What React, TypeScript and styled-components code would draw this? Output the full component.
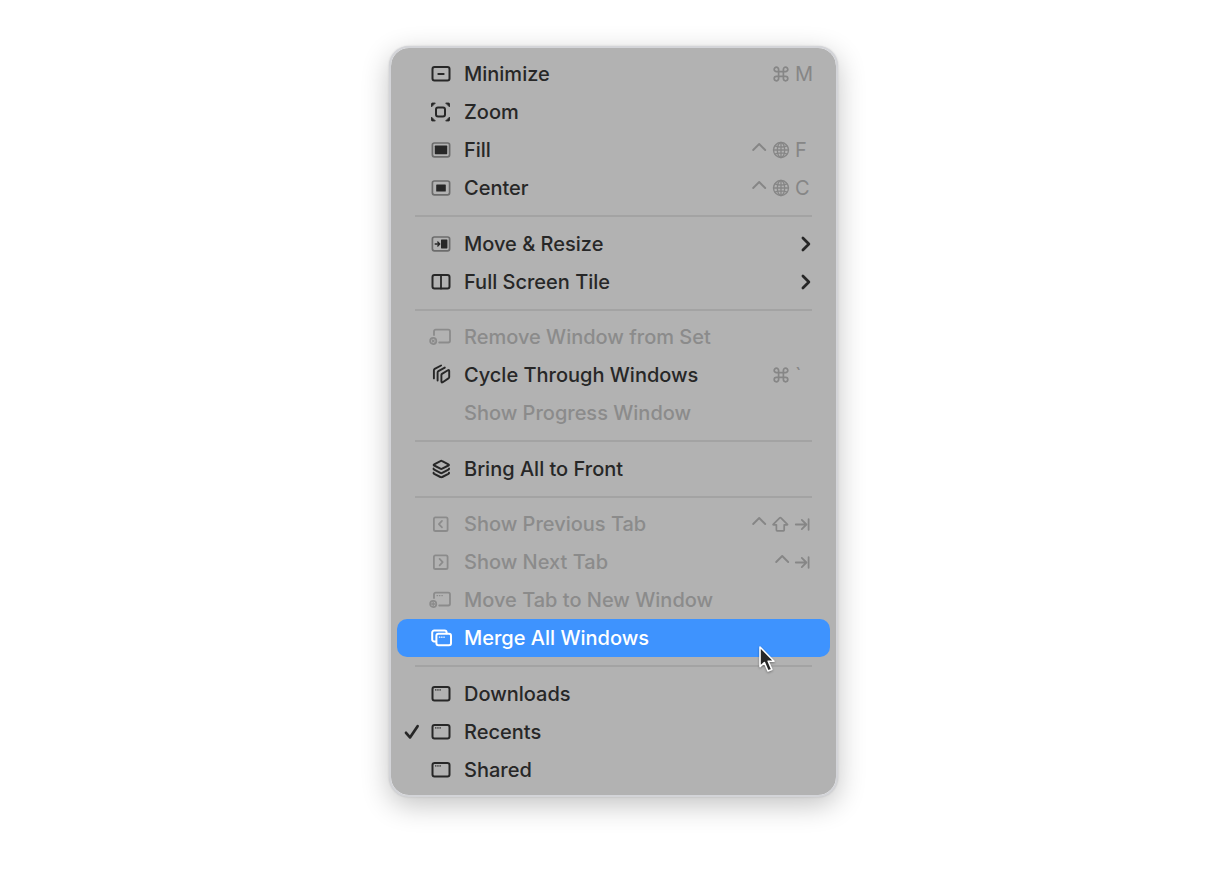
import React from "react";
import styled, { createGlobalStyle } from "styled-components";

const GlobalStyle = createGlobalStyle`
  *, *::before, *::after { box-sizing: border-box; }
  body {
    margin: 0;
    background: #ffffff;
    font-family: Inter, "Liberation Sans", sans-serif;
  }
`;

const Page = styled.main`
  display: flex;
  justify-content: center;
  align-items: flex-start;
  min-height: 100vh;
  padding: 46px 0 46px 11px;
`;

const Group = styled.div`
  display: flex;
  flex-direction: column;
  padding: 0 6px;
`;

const Separator = styled.hr`
  width: auto;
  height: 18px;
  margin: 0 24px;
  border: 0;
  background: linear-gradient(#a3a3a3, #a3a3a3) center / 100% 2px no-repeat;
`;

const MenuPanel = styled.div`
  display: flex;
  flex-direction: column;
  flex: 0 1 449px;
  padding: 7px 0 6px;
  border: 2px solid #d3d4d8;
  border-radius: 20px;
  background: #b2b2b2;
  background-clip: padding-box;
  box-shadow: 0 0 2px rgba(0, 0, 0, 0.16), 0 8px 28px rgba(0, 0, 0, 0.24);

  ${Separator}:nth-of-type(even) {
    height: 17px;
  }
`;

const Item = styled.button<{ $active?: boolean }>`
  position: relative;
  display: grid;
  grid-template-columns: 15px 25px 1fr auto;
  column-gap: 10px;
  align-items: center;
  height: 38px;
  padding: 0 17px 0 7px;
  border: 0;
  border-radius: 10px;
  background: ${(p) => (p.$active ? "#3e93fe" : "transparent")};
  color: ${(p) => (p.$active ? "#ffffff" : "#272727")};
  font: 500 20px/24px Inter, "Liberation Sans", sans-serif;
  text-align: left;
  white-space: nowrap;

  &:disabled {
    color: #8b8b8b;
  }
`;

const Glyph = styled.svg`
  display: block;
  fill: none;
  stroke: currentColor;
  stroke-linecap: round;
  stroke-linejoin: round;
  overflow: visible;
`;

const Shortcut = styled.span`
  display: flex;
  align-items: center;
  gap: 5px;
  color: #868686;
  font-weight: 400;
`;

const Key = styled.span`
  width: 18px;
`;

const Pointer = styled.svg`
  position: absolute;
  right: 54px;
  bottom: -18px;
  overflow: visible;
  filter: drop-shadow(0 1px 1px rgba(0, 0, 0, 0.35));
`;

type IconName =
  | "minimize" | "zoom" | "fill" | "center" | "move" | "tile" | "remove"
  | "cycle" | "layers" | "prev" | "next" | "moveTab" | "merge" | "window";

const frame = <rect x="3.5" y="5" width="17" height="13.6" rx="2" strokeWidth="2" />;
const lightFrame = <rect x="3.4" y="5" width="17.2" height="13.8" rx="2" strokeWidth="1.7" stroke="#6c6c6c" />;
const detached = (
  <>
    <path d="M5 10V6.4A1.7 1.7 0 0 1 6.7 4.7H19.3A1.7 1.7 0 0 1 21 6.4V15.8A1.7 1.7 0 0 1 19.3 17.5H10.2" strokeWidth="1.8" />
    <circle cx="4.2" cy="16" r="3.1" strokeWidth="1.7" />
  </>
);

const drawings: Record<IconName, React.ReactNode> = {
  minimize: (
    <>
      {frame}
      <path d="M9.3 12H14.7" strokeWidth="1.9" />
    </>
  ),
  zoom: (
    <>
      <rect x="7" y="7.5" width="9" height="9" rx="2" strokeWidth="2" />
      <path
        d="M2.6 6.4V3.6Q2.6 3.1 3.1 3.1H5.9ZM17.1 3.1H19.9Q20.4 3.1 20.4 3.6V6.4ZM20.4 17.6V20.4Q20.4 20.9 19.9 20.9H17.1ZM5.9 20.9H3.1Q2.6 20.9 2.6 20.4V17.6Z"
        fill="currentColor"
        strokeWidth="1"
      />
    </>
  ),
  fill: (
    <>
      {lightFrame}
      <rect x="5.8" y="7.6" width="12.4" height="8.6" rx="0.6" fill="currentColor" stroke="none" />
    </>
  ),
  center: (
    <>
      {lightFrame}
      <rect x="7.2" y="8.5" width="9.6" height="7" rx="0.6" fill="currentColor" stroke="none" />
    </>
  ),
  move: (
    <>
      {lightFrame}
      <rect x="12" y="7.4" width="6.4" height="9" rx="0.6" fill="currentColor" stroke="none" />
      <path d="M6.2 12H10.4M8.8 10.1L10.7 12L8.8 13.9" strokeWidth="1.4" />
    </>
  ),
  tile: (
    <>
      {frame}
      <path d="M12 5V18.6" strokeWidth="1.8" />
    </>
  ),
  remove: (
    <>
      {detached}
      <path d="M3.1 14.9L5.3 17.1M5.3 14.9L3.1 17.1" strokeWidth="1.2" />
    </>
  ),
  cycle: (
    <g strokeWidth="1.9">
      <path d="M13 10.9L18.9 7.3Q20.2 6.6 20.2 8V13.9Q20.2 14.9 19.4 15.4L13.7 19.2Q12.4 20 12.4 18.6V12Q12.4 11.3 13 10.9Z" />
      <path d="M8.6 17.6V9.6Q8.6 8.6 9.4 8.1L15.8 4.6M4.9 15.4V7.4Q4.9 6.4 5.7 5.9L12.1 2.5" />
    </g>
  ),
  layers: (
    <g strokeWidth="2">
      <path d="M11.4 4.1Q12.3 3.6 13.2 4.1L19.4 7.3Q20.5 7.9 19.4 8.5L13.2 11.7Q12.3 12.2 11.4 11.7L5.2 8.5Q4.1 7.9 5.2 7.3Z" />
      <path d="M4.6 11.6Q4.4 12.2 5.2 12.7L11.4 15.9Q12.3 16.4 13.2 15.9L19.4 12.7Q20.2 12.2 20 11.6M4.6 15.7Q4.4 16.3 5.2 16.8L11.4 20Q12.3 20.5 13.2 20L19.4 16.8Q20.2 16.3 20 15.7" />
    </g>
  ),
  prev: (
    <>
      <rect x="4.9" y="5.3" width="13.7" height="13.7" rx="1.6" strokeWidth="1.8" />
      <path d="M13 8.9L9.9 12.1L13 15.3" strokeWidth="1.7" />
    </>
  ),
  next: (
    <>
      <rect x="4.9" y="5.3" width="13.7" height="13.7" rx="1.6" strokeWidth="1.8" />
      <path d="M10.6 8.9L13.7 12.1L10.6 15.3" strokeWidth="1.7" />
    </>
  ),
  moveTab: (
    <>
      {detached}
      <path d="M4.2 14.4V17.6M2.6 16H5.8" strokeWidth="1.3" />
      <path d="M8 7.6H8.6M10.4 7.6H11M12.8 7.6H13.4" strokeWidth="1.1" />
    </>
  ),
  merge: (
    <>
      <path d="M6.3 15.4H5.2A2 2 0 0 1 3.2 13.4V6.6A2 2 0 0 1 5.2 4.6H15.6A2 2 0 0 1 17.6 6.6V7.2" strokeWidth="2" />
      <rect x="7.4" y="7.8" width="14.6" height="11.4" rx="2" strokeWidth="2" />
      <path d="M10.4 11.2H10.9M12.6 11.2H13.1M14.8 11.2H15.3" strokeWidth="1.2" />
    </>
  ),
  window: (
    <>
      {frame}
      <path d="M6.5 7.9H7M8.7 7.9H9.2M10.9 7.9H11.4" strokeWidth="1.1" />
    </>
  ),
};

type KeyName = "cmd" | "ctrl" | "globe" | "shift" | "tab";

const keyDrawings: Record<KeyName, React.ReactNode> = {
  cmd: (
    <path
      d="M6.6 6.6H11.4V11.4H6.6ZM6.6 6.6H4.4A2.2 2.2 0 1 1 6.6 4.4ZM11.4 6.6V4.4A2.2 2.2 0 1 1 13.6 6.6ZM11.4 11.4H13.6A2.2 2.2 0 1 1 11.4 13.6ZM6.6 11.4V13.6A2.2 2.2 0 1 1 4.4 11.4Z"
      strokeWidth="1.7"
    />
  ),
  ctrl: <path d="M4.2 9L10.2 3L16.2 9" strokeWidth="1.9" />,
  globe: (
    <g strokeWidth="1.3">
      <circle cx="9" cy="9" r="7.5" />
      <ellipse cx="9" cy="9" rx="3.7" ry="7.5" />
      <path d="M9 1.5V16.5M1.5 9H16.5M2.8 4.9Q9 7.3 15.2 4.9M2.8 13.1Q9 10.7 15.2 13.1" />
    </g>
  ),
  shift: <path d="M7.7 2.9Q8.3 2.3 8.9 2.9L15.4 9.3Q15.8 9.8 15.1 9.8H12.2V15Q12.2 15.8 11.4 15.8H5.2Q4.4 15.8 4.4 15V9.8H1.5Q0.8 9.8 1.2 9.3Z" strokeWidth="1.7" />,
  tab: <path d="M0.8 9.5H11.2M6.8 4.9L11.4 9.5L6.8 14.1M13.6 4.2V14.8" strokeWidth="1.8" />,
};

const isKeyName = (k: string): k is KeyName => k in keyDrawings;

const KeyCap = ({ name }: { name: string }) => (
  <Key>
    {isKeyName(name) ? (
      <Glyph width="18" height="18" viewBox="0 0 18 18" aria-hidden="true">
        {keyDrawings[name]}
      </Glyph>
    ) : (
      name
    )}
  </Key>
);

const Check = () => (
  <Glyph width="15" height="16" viewBox="0 0 15 16" aria-hidden="true">
    <path d="M2 8.8L6 13.4L13.6 2.2" strokeWidth="2.7" />
  </Glyph>
);

const SubmenuArrow = () => (
  <Glyph width="19" height="18" viewBox="0 0 19 18" aria-hidden="true">
    <path d="M8.9 3L14.9 9L8.9 15" strokeWidth="2.7" />
  </Glyph>
);

interface Entry {
  label: string;
  icon?: IconName;
  keys?: string[];
  submenu?: boolean;
  disabled?: boolean;
  checked?: boolean;
  active?: boolean;
}

const groups: Entry[][] = [
  [
    { label: "Minimize", icon: "minimize", keys: ["cmd", "M"] },
    { label: "Zoom", icon: "zoom" },
    { label: "Fill", icon: "fill", keys: ["ctrl", "globe", "F"] },
    { label: "Center", icon: "center", keys: ["ctrl", "globe", "C"] },
  ],
  [
    { label: "Move & Resize", icon: "move", submenu: true },
    { label: "Full Screen Tile", icon: "tile", submenu: true },
  ],
  [
    { label: "Remove Window from Set", icon: "remove", disabled: true },
    { label: "Cycle Through Windows", icon: "cycle", keys: ["cmd", "`"] },
    { label: "Show Progress Window", disabled: true },
  ],
  [{ label: "Bring All to Front", icon: "layers" }],
  [
    { label: "Show Previous Tab", icon: "prev", keys: ["ctrl", "shift", "tab"], disabled: true },
    { label: "Show Next Tab", icon: "next", keys: ["ctrl", "tab"], disabled: true },
    { label: "Move Tab to New Window", icon: "moveTab", disabled: true },
    { label: "Merge All Windows", icon: "merge", active: true },
  ],
  [
    { label: "Downloads", icon: "window" },
    { label: "Recents", icon: "window", checked: true },
    { label: "Shared", icon: "window" },
  ],
];

const MenuItem = ({ label, icon, keys, submenu, disabled, checked, active }: Entry) => (
  <Item
    type="button"
    role={checked ? "menuitemcheckbox" : "menuitem"}
    aria-checked={checked}
    aria-haspopup={submenu ? "menu" : undefined}
    disabled={disabled}
    $active={active}
  >
    <span>{checked && <Check />}</span>
    <span>
      {icon && (
        <Glyph width="24" height="24" viewBox="0 0 24 24" aria-hidden="true">
          {drawings[icon]}
        </Glyph>
      )}
    </span>
    <span>{label}</span>
    {keys && (
      <Shortcut>
        {keys.map((k) => (
          <KeyCap key={k} name={k} />
        ))}
      </Shortcut>
    )}
    {submenu && <SubmenuArrow />}
    {active && (
      <Pointer width="18" height="30" viewBox="0 0 18 30" aria-hidden="true">
        <path
          d="M2 2V21.6L6.4 17.6L10 26L13.8 24.4L10.2 16.2H16Z"
          fill="#262626"
          stroke="#ffffff"
          strokeWidth="1.6"
          strokeLinejoin="round"
        />
      </Pointer>
    )}
  </Item>
);

export default function App() {
  return (
    <>
      <GlobalStyle />
      <Page>
        <MenuPanel role="menu" aria-label="Window">
          {groups.map((group, i) => (
            <React.Fragment key={group[0].label}>
              {i > 0 && <Separator />}
              <Group role="group">
                {group.map((entry) => (
                  <MenuItem key={entry.label} {...entry} />
                ))}
              </Group>
            </React.Fragment>
          ))}
        </MenuPanel>
      </Page>
    </>
  );
}
